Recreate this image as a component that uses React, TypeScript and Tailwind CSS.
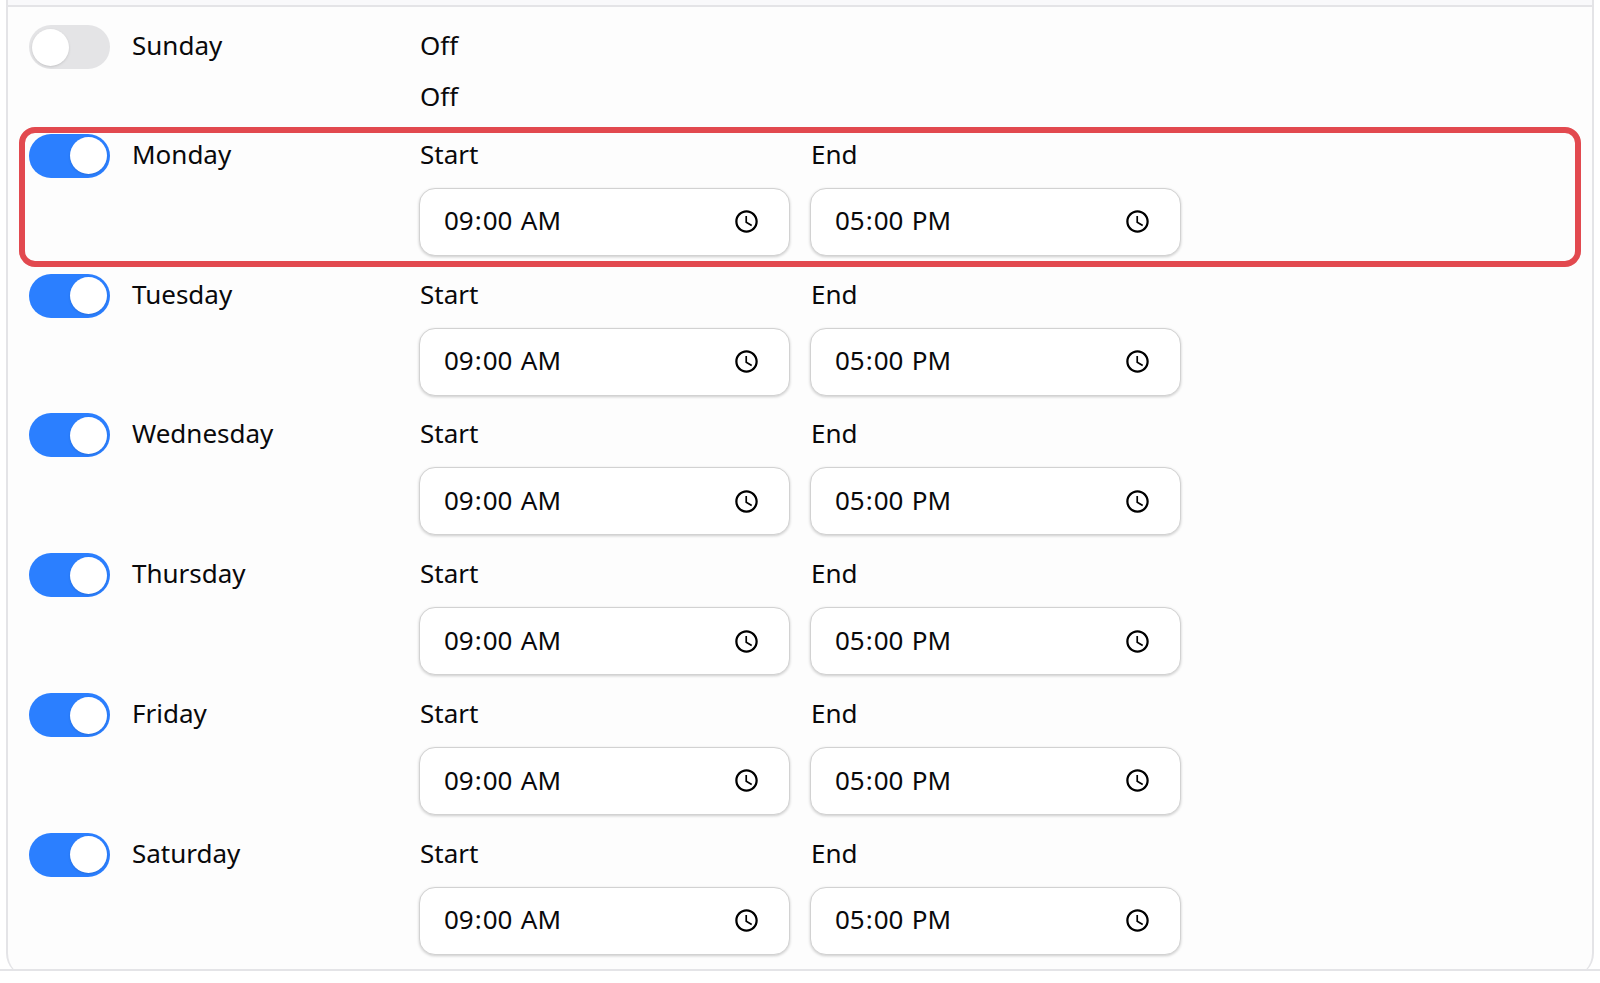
import { useState } from "react";
import clsx from "clsx";

type Day = {
  name: string;
  enabled: boolean;
  start: string;
  end: string;
  highlighted?: boolean;
};

const initialDays: Day[] = [
  { name: "Sunday", enabled: false, start: "09:00", end: "17:00" },
  { name: "Monday", enabled: true, start: "09:00", end: "17:00", highlighted: true },
  { name: "Tuesday", enabled: true, start: "09:00", end: "17:00" },
  { name: "Wednesday", enabled: true, start: "09:00", end: "17:00" },
  { name: "Thursday", enabled: true, start: "09:00", end: "17:00" },
  { name: "Friday", enabled: true, start: "09:00", end: "17:00" },
  { name: "Saturday", enabled: true, start: "09:00", end: "17:00" },
];

type TimeFieldProps = {
  id: string;
  label: string;
  value: string;
  onChange: (value: string) => void;
};

function TimeField({ id, label, value, onChange }: TimeFieldProps) {
  return (
    <div className="flex flex-col gap-3.5">
      <label htmlFor={id} className="pl-px">
        {label}
      </label>
      <input
        id={id}
        type="time"
        value={value}
        onChange={(e) => onChange(e.target.value)}
        className={clsx(
          "h-[68px] w-full rounded-2xl border border-[#d2d2d2] bg-white pr-[26px] pl-[23px]",
          "shadow-[0_1px_3px_0_#00000033]",
          "[&::-webkit-datetime-edit]:pb-[3px] [&::-webkit-datetime-edit-ampm-field]:pl-[3px]",
        )}
      />
    </div>
  );
}

type DayRowProps = {
  day: Day;
  onChange: (changes: Partial<Day>) => void;
};

function DayRow({ day, onChange }: DayRowProps) {
  return (
    <div className="relative grid grid-cols-4 gap-5">
      <div className="flex items-start gap-[22px] pl-px">
        <input
          id={day.name}
          type="checkbox"
          role="switch"
          checked={day.enabled}
          onChange={(e) => onChange({ enabled: e.target.checked })}
          className={clsx(
            "flex h-11 w-[81px] shrink-0 appearance-none items-center rounded-full bg-[#e4e4e6] px-[3px]",
            "before:size-[37px] before:rounded-full before:bg-white before:shadow-sm",
            "checked:justify-end checked:bg-[#2b7fff]",
          )}
        />
        <label htmlFor={day.name}>{day.name}</label>
      </div>
      {day.enabled ? (
        <>
          <TimeField
            id={`${day.name}-start`}
            label="Start"
            value={day.start}
            onChange={(start) => onChange({ start })}
          />
          <TimeField
            id={`${day.name}-end`}
            label="End"
            value={day.end}
            onChange={(end) => onChange({ end })}
          />
        </>
      ) : (
        <div className="flex flex-col gap-[11px] pl-px">
          <p>Off</p>
          <p>Off</p>
        </div>
      )}
      {day.highlighted && (
        <div className="pointer-events-none absolute -inset-x-[9px] -top-[7px] -bottom-[11px] rounded-2xl border-6 border-[#e2494f]" />
      )}
    </div>
  );
}

export default function App() {
  const [days, setDays] = useState(initialDays);

  const updateDay = (name: string, changes: Partial<Day>) => {
    setDays(days.map((day) => (day.name === name ? { ...day, ...changes } : day)));
  };

  return (
    <div className="flex min-h-screen flex-col bg-white pb-3 font-['Noto_Sans',sans-serif] text-[26px] leading-10 text-[#09090b]">
      <main className="flex grow flex-col overflow-hidden border-b-2 border-[#e4e4e7] px-1.5">
        <section className="-mb-2 flex grow flex-col rounded-b-3xl border-x-2 border-[#e4e4e7] bg-[#fdfdfd]">
          <div className="h-[7px] border-b-2 border-[#e4e4e7] bg-[#f9f9fb]" />
          <div className="flex grow flex-col justify-between px-5 pt-[18px] pb-[22px]">
            {days.map((day) => (
              <DayRow
                key={day.name}
                day={day}
                onChange={(changes) => updateDay(day.name, changes)}
              />
            ))}
          </div>
        </section>
      </main>
    </div>
  );
}
